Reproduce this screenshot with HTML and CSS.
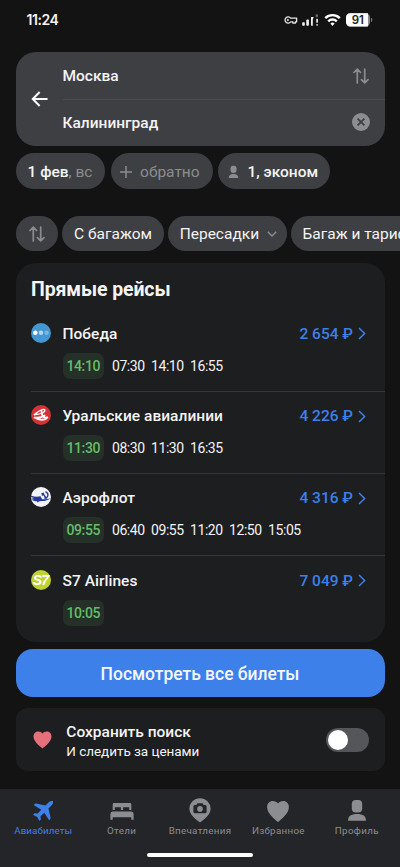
FILE: index.html
```html
<!DOCTYPE html>
<html lang="ru">
<head>
<meta charset="utf-8">
<title>Авиабилеты</title>
<link rel="stylesheet" href="styles.css">
</head>
<body>
<div class="app">
  <header class="status">
    <span class="clock">11:24</span>
    <svg class="status-icons" width="90" height="16" viewBox="0 0 90 16">
      <g fill="none" stroke="#e8e8e8" stroke-width="1.3">
        <path d="M7.6 6.1A3.1 3.1 0 1 0 7.6 9.9H9.9V11.2H12.3V9.9H13.6V6.1Z" stroke-linejoin="round"/>
      </g>
      <circle cx="4.9" cy="8" r="1" fill="#e8e8e8"/>
      <g fill="#f4f4f4">
        <rect x="19.2" y="10.2" width="2.6" height="3.6" rx=".8"/>
        <rect x="23.3" y="7.6" width="2.6" height="6.2" rx=".8"/>
        <path d="M28 5.4Q28 4.9 28.5 4.9H30.7L29.8 7.5V13.8H28.6Q28 13.8 28 13.1Z"/>
        <rect x="33.3" y="6.8" width="1.6" height="4" rx=".6"/>
        <rect x="33.3" y="12" width="1.6" height="1.8" rx=".7"/>
      </g>
      <rect x="32.6" y="2.2" width="2.4" height="3" rx=".8" fill="#666"/>
      <g fill="none" stroke="#fff" stroke-width="2.4">
        <path d="M42.2 6.1A10.5 10.5 0 0 1 56.8 6.1"/>
        <path d="M45.2 9.3A6.2 6.2 0 0 1 53.8 9.3"/>
      </g>
      <path d="M47.4 11.6A3 3 0 0 1 51.6 11.6L49.5 13.9Z" fill="#fff"/>
      <rect x="63" y="1.3" width="24" height="13.2" rx="4.2" fill="#8b8b8b"/>
      <path d="M67.2 1.3H85V14.5H67.2A4.2 4.2 0 0 1 63 10.3V5.5A4.2 4.2 0 0 1 67.2 1.3Z" fill="#fff"/>
      <path d="M88 5.8Q89.4 6.2 89.4 7.9T88 10Z" fill="#777"/>
      <text class="battery-text" x="74.8" y="12.1" text-anchor="middle">91</text>
    </svg>
  </header>

  <section class="search">
    <svg class="back" width="18" height="16" viewBox="0 0 18 16" fill="none" stroke="#fff" stroke-width="2"><path d="M16.6 8H2M8.6 1L1.8 8L8.6 15"/></svg>
    <div class="fields">
      <div class="field"><span class="city">Москва</span>
        <svg class="swap" width="16" height="16" viewBox="0 0 16 16" fill="none" stroke="#8c8d90" stroke-width="1.7" stroke-linecap="round" stroke-linejoin="round"><path d="M4.3 15V1.5M1 4.5L4.3 1.2L7.6 4.5M11.7 1.2V14.5M8.4 11.6L11.7 14.9L15 11.6"/></svg>
      </div>
      <div class="field"><span class="city">Калининград</span>
        <svg class="clear" width="18" height="18" viewBox="0 0 18 18"><circle cx="9" cy="9" r="9" fill="#8c8d90"/><path d="M5.6 5.6L12.4 12.4M12.4 5.6L5.6 12.4" stroke="#3e3f42" stroke-width="1.8"/></svg>
      </div>
    </div>
  </section>

  <div class="chips params">
    <div class="chip date">1 фев<span class="dim">, вс</span></div>
    <div class="chip return"><svg width="12" height="12" viewBox="0 0 12 12" stroke="#8c8d90" stroke-width="1.5"><path d="M6 0V12M0 6H12"/></svg>обратно</div>
    <div class="chip pax"><svg width="11" height="14" viewBox="0 0 11 14" fill="#8c8d90"><rect x="2.5" y=".8" width="6" height="7.2" rx="2.4"/><path d="M.8 13C.8 10 2.8 9 5.5 9S10.2 10 10.2 13Z"/></svg>1, эконом</div>
  </div>

  <div class="chips filters">
    <div class="chip sort"><svg width="16" height="16" viewBox="0 0 16 16" fill="none" stroke="#8c8d90" stroke-width="1.7" stroke-linecap="round" stroke-linejoin="round"><path d="M4.3 15V1.5M1 4.5L4.3 1.2L7.6 4.5M11.7 1.2V14.5M8.4 11.6L11.7 14.9L15 11.6"/></svg></div>
    <div class="chip baggage">С багажом</div>
    <div class="chip stops">Пересадки<svg width="10" height="6" viewBox="0 0 10 6" fill="none" stroke="#8c8d90" stroke-width="1.4"><path d="M.8 .8L5 4.9L9.2 .8"/></svg></div>
    <div class="chip tariffs">Багаж и тарифы</div>
  </div>

  <section class="flights">
    <h1>Прямые рейсы</h1>
    <article class="flight">
      <svg class="logo" width="20" height="20" viewBox="0 0 20 20"><circle cx="10" cy="10" r="10" fill="#4397d3"/><circle cx="4.3" cy="9.7" r="2.3" fill="#fff"/><circle cx="10" cy="9.7" r="2.2" fill="#b4d5ed"/><circle cx="15.6" cy="9.7" r="2.2" fill="#7db6e0"/></svg>
      <div class="info">
        <div class="head"><span class="name">Победа</span><span class="price">2 654 ₽</span><svg class="more" width="8" height="13" viewBox="0 0 8 13"><path d="M1 1L6.6 6.5L1 12"/></svg></div>
        <div class="times"><b>14:10</b><span>07:30</span><span>14:10</span><span>16:55</span></div>
      </div>
    </article>
    <article class="flight">
      <svg class="logo" width="20" height="20" viewBox="0 0 20 20"><circle cx="10" cy="10" r="10" fill="#d13336"/><g fill="none" stroke="#fff" stroke-linecap="round" stroke-linejoin="round"><path d="M3.2 9.8C6 7.500 9 4.800 12.200 4.400C14.800 4.100 14 6.500 12.300 7.500C9.800 9 6.500 9.600 3.200 9.800Z" stroke-width="1.400"/><path d="M10.500 6C10.500 11 13 13.200 16.300 12.500C14 15.600 8 15.400 3.500 12.600C7 13 11 12.500 13.600 10.500" stroke-width="1.800"/></g></svg>
      <div class="info">
        <div class="head"><span class="name">Уральские авиалинии</span><span class="price">4 226 ₽</span><svg class="more" width="8" height="13" viewBox="0 0 8 13"><path d="M1 1L6.6 6.5L1 12"/></svg></div>
        <div class="times"><b>11:30</b><span>08:30</span><span>11:30</span><span>16:35</span></div>
      </div>
    </article>
    <article class="flight">
      <svg class="logo" width="20" height="20" viewBox="0 0 20 20"><circle cx="10" cy="10" r="10" fill="#f2f3f6"/><g fill="#27399a"><path d="M.1 8.8C4 10 7 9.8 9.5 9.3L10.8 11.8C12 12.8 14.5 12.2 19.8 11.5C16 13.4 13 14.5 10.5 13.9C5.5 14.8 1.7 14 .7 12.5L3 12.3L.3 11.4L3.2 10.9L.1 10.2Z"/><path d="M10.3 6.2L12.8 5.5L13.3 7.3L16 11.3L14.7 12L12.3 8.3L11 9Z"/></g><path d="M14.500 4.600C18.500 6.600 17.300 11.200 13.200 11.100M6.300 15L8.500 13" fill="none" stroke="#27399a" stroke-width="1.300"/></svg>
      <div class="info">
        <div class="head"><span class="name">Аэрофлот</span><span class="price">4 316 ₽</span><svg class="more" width="8" height="13" viewBox="0 0 8 13"><path d="M1 1L6.6 6.5L1 12"/></svg></div>
        <div class="times"><b>09:55</b><span>06:40</span><span>09:55</span><span>11:20</span><span>12:50</span><span>15:05</span></div>
      </div>
    </article>
    <article class="flight">
      <svg class="logo" width="20" height="20" viewBox="0 0 20 20"><circle cx="10" cy="10" r="10" fill="#bfd330"/><text class="s7" x="9.4" y="15" text-anchor="middle">S7</text></svg>
      <div class="info">
        <div class="head"><span class="name">S7 Airlines</span><span class="price">7 049 ₽</span><svg class="more" width="8" height="13" viewBox="0 0 8 13"><path d="M1 1L6.6 6.5L1 12"/></svg></div>
        <div class="times"><b>10:05</b></div>
      </div>
    </article>
  </section>

  <button class="all">Посмотреть все билеты</button>

  <section class="save">
    <svg width="19" height="18" viewBox="0 0 24 22"><path d="M12 21.8C9 19.5 .6 13 .6 6.7C.6 2.8 3.3 .3 6.5 .3C9 .3 11 1.6 12 2.7C13 1.6 15 .3 17.5 .3C20.7 .3 23.4 2.8 23.4 6.7C23.4 13 15 19.5 12 21.8Z" fill="#e76f7b"/></svg>
    <div class="save-text"><strong>Сохранить поиск</strong><span>И следить за ценами</span></div>
    <div class="toggle"><i></i></div>
  </section>

  <nav class="tabs">
    <div class="tab active"><svg width="24" height="26" viewBox="0 0 24 26"><path d="M21.9 3.1C20.5 2.5 18.8 3.2 17.7 4.3L14.5 7.5L5.2 5.5C4.5 5.4 4.1 5.6 3.7 6L2.7 7L10.2 11.8L6.7 15.6L3.5 15.2L2 16.7L6.2 18.9L8.4 23L9.9 21.5L9.5 18.3L13.3 14.8L18.1 22.3L19.1 21.3C19.5 20.9 19.7 20.5 19.6 19.8L17.5 10.5L20.7 7.3C21.8 6.2 22.5 4.5 21.9 3.1Z" fill="#3d80ea"/></svg><span>Авиабилеты</span></div>
    <div class="tab"><svg width="24" height="26" viewBox="0 0 24 26" fill="#8c8d90"><path d="M2.7 6.2Q2.7 5 3.9 5H20.1Q21.3 5 21.3 6.2V12H19.2V9.3H13.1V12H10.9V9.3H4.8V12H2.7Z"/><path d="M2.7 13.5H21.3Q23.6 13.5 23.6 16V21.8H21.3V19.3H2.7V21.8H.4V16Q.4 13.5 2.7 13.5Z"/></svg><span>Отели</span></div>
    <div class="tab"><svg width="24" height="26" viewBox="0 0 24 26"><path d="M12 .2A10.6 10.6 0 0 1 22.6 10.8C22.6 16.8 16 21.5 12 24.5C8 21.5 1.4 16.8 1.4 10.8A10.6 10.6 0 0 1 12 .2Z" fill="#8c8d90"/><path d="M5.4 8.5Q5.4 7 6.9 7H8.3L9.5 5.3H14.5L15.7 7H17.1Q18.6 7 18.6 8.5V13.9Q18.6 15.2 17.1 15.2H6.9Q5.4 15.2 5.4 13.9Z" fill="#242528"/><circle cx="12" cy="10.9" r="2.8" fill="#8c8d90"/></svg><span>Впечатления</span></div>
    <div class="tab"><svg width="24" height="26" viewBox="0 0 24 26"><path d="M12 23.9C9 21.6 1.1 15.5 1.1 9.2C1.1 5.5 3.6 3.1 6.8 3.1C9 3.1 11 4.2 12 5.3C13 4.2 15 3.1 17.2 3.1C20.4 3.1 22.9 5.5 22.9 9.2C22.9 15.5 15 21.6 12 23.9Z" fill="#8c8d90"/></svg><span>Избранное</span></div>
    <div class="tab"><svg width="24" height="26" viewBox="0 0 24 26" fill="#8c8d90"><rect x="6.8" y="1.9" width="10.4" height="12.5" rx="4"/><path d="M3 22.8C3 17.9 6 15.9 12 15.9S21 17.9 21 22.8Z"/></svg><span>Профиль</span></div>
    <div class="home"></div>
  </nav>
</div>
</body>
</html>
```
FILE: styles.css
```css
* { box-sizing: border-box; }

body {
  margin: 0;
  background: #131313;
  color: #f4f4f5;
  font-family: Roboto, "Liberation Sans", sans-serif;
  overflow: hidden;
}

svg { display: block; flex: none; }

.app {
  width: 400px;
  height: 867px;
  display: flex;
  flex-direction: column;
  overflow: hidden;
}

.status {
  height: 52px;
  padding: 12px 27px 0 26.5px;
  display: flex;
  justify-content: space-between;
  flex: none;
}

.clock { font-family: Inter, sans-serif; font-size: 14px; font-weight: 600; line-height: 16px; letter-spacing: -.45px; }
.battery-text { font-family: Inter, sans-serif; font-size: 11.5px; font-weight: 600; fill: #222; }

.search {
  flex: none;
  height: 93.5px;
  margin: 0 15.5px;
  padding-left: 15px;
  border-radius: 20px;
  background: #3e3f42;
  display: flex;
  align-items: center;
}

.fields { flex: 1; margin-left: 14px; }

.field {
  height: 46.5px;
  padding-right: 14.5px;
  display: flex;
  align-items: center;
  justify-content: space-between;
}

.field + .field { border-top: 1px solid #4b4d51; }
.swap { margin-right: 1px; }
.city { font-size: 15.5px; font-weight: 500; padding-top: 1px; }
.clear { margin-bottom: 1px; }

.chips { display: flex; flex: none; white-space: nowrap; }

.chip {
  height: 35.5px;
  border-radius: 18px;
  background: #3e3f42;
  display: flex;
  align-items: center;
  flex: none;
  font-size: 15.5px;
}

.params { margin: 7.7px 0 0 15.5px; gap: 5.8px; font-weight: 500; }
.chip.date, .chip.return, .chip.pax { padding-top: 1.6px; }
.date { width: 89.3px; padding-left: 12px; }
.dim { color: #8c8d90; font-weight: 400; }
.return { width: 102px; padding-left: 9.5px; gap: 8px; color: #8c8d90; font-weight: 400; }
.pax { width: 112px; padding-left: 10px; gap: 8px; }

.filters { margin: 27.3px 0 0 15.5px; gap: 4.2px; }
.sort { width: 42.5px; justify-content: center; }
.baggage { width: 101.8px; justify-content: center; }
.stops { width: 118.7px; padding-left: 11.5px; gap: 7.5px; }
.tariffs { width: 140px; padding-left: 11.5px; }

.flights {
  flex: none;
  height: 378.5px;
  margin: 11.7px 15.5px 0;
  padding-left: 15.5px;
  border-radius: 20px;
  background: #1d1e20;
}

h1 { margin: 0; padding-top: 13.7px; height: 45.3px; font-size: 19.5px; line-height: 26px; font-weight: 700; letter-spacing: -.12px; }

.flight { height: 82.2px; display: flex; padding-top: 14.3px; }
.flight + .flight { border-top: 1px solid #34363b; padding-top: 13.6px; }
.logo { margin-right: 11.5px; }
.info { flex: 1; }
.head { display: flex; align-items: center; height: 22px; padding-right: 19px; }
.name { flex: 1; font-size: 15.5px; font-weight: 500; letter-spacing: .03px; }
.price { color: #3d80ea; font-size: 15.5px; font-weight: 500; }
.more { margin-left: 4.5px; fill: none; stroke: #3d80ea; stroke-width: 1.5; }
.times { display: flex; align-items: center; gap: 6.3px; margin-top: 8px; font-size: 14px; line-height: 26px; letter-spacing: -.43px; }
.times b { width: 41.5px; border-radius: 7px; margin-right: 1.7px; text-align: center; color: #67bd69; background: #243028; font-weight: 500; }
.s7 { font-family: "Liberation Sans", sans-serif; font-weight: 700; font-style: italic; font-size: 14px; letter-spacing: -.9px; fill: #fff; }

.all {
  flex: none;
  height: 47.5px;
  margin: 7.6px 15.5px 0;
  padding: 1px 0 0;
  border: 0;
  border-radius: 17px;
  background: #3d80ea;
  color: #f4f7fd;
  font: 500 17.5px Roboto, sans-serif;
  letter-spacing: -.03px;
}

.save {
  flex: none;
  height: 62.5px;
  margin: 11.6px 15.5px 0;
  padding: 0 15.5px 0 17.5px;
  border-radius: 12px;
  background: #1d1e20;
  display: flex;
  align-items: center;
}

.save-text { flex: 1; margin-left: 14.3px; padding-top: 3.5px; display: flex; flex-direction: column; }
.save-text strong { font-size: 15.5px; line-height: 20px; font-weight: 500; }
.save-text span { font-size: 13.5px; line-height: 19px; letter-spacing: -.04px; }
.toggle { width: 43px; height: 24px; padding: 2px; border-radius: 12px; background: #555659; }
.toggle i { display: block; width: 20px; height: 20px; border-radius: 50%; background: #fff; }

.tabs {
  flex: 1;
  margin-top: 17.8px;
  padding: 9px 4px 0;
  background: #242528;
  display: grid;
  grid-template-columns: repeat(5, 1fr);
  grid-template-rows: 55.5px 4px;
}

.tab { display: flex; flex-direction: column; align-items: center; color: #8c8d90; font-size: 9.8px; letter-spacing: .3px; white-space: nowrap; }
.tab span { line-height: 14px; margin-top: .8px; }
.active { color: #3d80ea; letter-spacing: .1px; }
.home { grid-column: 1 / -1; justify-self: center; width: 106px; height: 4px; border-radius: 2px; background: #fff; }
```
